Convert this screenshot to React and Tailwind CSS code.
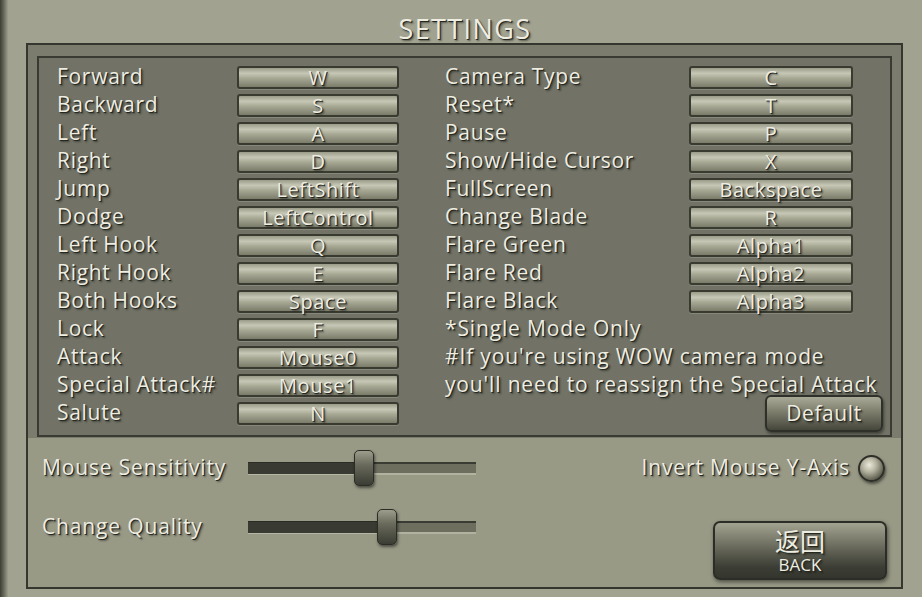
import React from 'react';

const LEFT_KEYS = [
    ['Forward', 'W'],
    ['Backward', 'S'],
    ['Left', 'A'],
    ['Right', 'D'],
    ['Jump', 'LeftShift'],
    ['Dodge', 'LeftControl'],
    ['Left Hook', 'Q'],
    ['Right Hook', 'E'],
    ['Both Hooks', 'Space'],
    ['Lock', 'F'],
    ['Attack', 'Mouse0'],
    ['Special Attack#', 'Mouse1'],
    ['Salute', 'N'],
];

const RIGHT_KEYS = [
    ['Camera Type', 'C'],
    ['Reset*', 'T'],
    ['Pause', 'P'],
    ['Show/Hide Cursor', 'X'],
    ['FullScreen', 'Backspace'],
    ['Change Blade', 'R'],
    ['Flare Green', 'Alpha1'],
    ['Flare Red', 'Alpha2'],
    ['Flare Black', 'Alpha3'],
];

const NOTES = [
    '*Single Mode Only',
    "#If you're using WOW camera mode",
    "you'll need to reassign the Special Attack",
];

// embossed light text used everywhere in this menu
const TXT = 'text-[#eeede2] [text-shadow:1px_1px_0_#26271f,2px_2px_2px_rgba(0,0,0,0.45)]';

function KeyBox({ value, width }) {
    return (
        <div
            className={`${width} h-[23px] rounded-[3px] border-2 border-[#393a30] bg-[linear-gradient(to_bottom,#9a9b88,#c6c7b4_28%,#a6a793_55%,#7a7b69)] shadow-[0_1px_0_rgba(255,255,255,0.15)] flex items-center justify-center`}
        >
            <span className={`text-[20px] leading-[19px] tracking-[0.6px] ${TXT}`}>{value}</span>
        </div>
    );
}

function Slider({ label, value }) {
    return (
        <div className="flex items-center h-[36px]">
            <span className={`w-[206px] text-[21px] tracking-[0.85px] ${TXT}`}>{label}</span>
            <div className="relative w-[228px] h-[36px] flex items-center">
                <div className="w-full h-[13px] flex">
                    <div
                        className="h-full bg-[#393a31] border-t border-[#2a2b24] border-b border-b-[#b5b6a3]"
                        style={{ width: `${value * 100}%` }}
                    />
                    <div className="flex-1 h-full border-t-2 border-[#3a3b32] border-b-2 border-b-[#b1b29f] bg-[#6d6e5e]" />
                </div>
                <div
                    className="absolute top-0 w-[20px] h-[36px] rounded-[5px] border border-[#2b2c25] bg-[linear-gradient(to_bottom,#9c9d8b,#6a6b5c_40%,#3b3c33)] shadow-[1px_2px_3px_rgba(0,0,0,0.5)]"
                    style={{ left: `calc(${value * 100}% - 10px)` }}
                />
            </div>
        </div>
    );
}

export default function App() {
    return (
        <div className="w-[922px] h-[597px] bg-[#a1a28f] flex overflow-hidden font-['Open_Sans',sans-serif]">
            <div className="w-[8px] h-full bg-gradient-to-r from-[#3d3e35] to-[#9c9d8a]" />
            <div className="flex-1 flex flex-col">
                <div className="h-[43px] flex items-end justify-center pb-[1px]">
                    <h1 className={`text-[27px] leading-none tracking-[1.4px] ${TXT}`}>SETTINGS</h1>
                </div>

                <div className="ml-[18px] w-[877px] h-[546px] border-2 border-[#35362d] bg-[#999a86] flex flex-col">
                    {/* key bindings */}
                    <div className="bg-[#7b7c6d] pl-[9px] pr-[9px] pt-[11px] pb-[1px]">
                        <div className="h-[381px] border-2 border-[#393a31] bg-[#727366] flex pt-[5px] pl-[18px]">
                            <div className="flex flex-col">
                                {LEFT_KEYS.map(([label, key]) => (
                                    <div key={label} className="flex items-center h-[28px]">
                                        <span className={`w-[180px] text-[21px] tracking-[0.7px] ${TXT}`}>{label}</span>
                                        <KeyBox value={key} width="w-[162px]" />
                                    </div>
                                ))}
                            </div>
                            <div className="flex flex-col ml-[46px] flex-1 pr-[7px]">
                                {RIGHT_KEYS.map(([label, key]) => (
                                    <div key={label} className="flex items-center h-[28px]">
                                        <span className={`w-[244px] text-[21px] tracking-[0.7px] ${TXT}`}>{label}</span>
                                        <KeyBox value={key} width="w-[164px]" />
                                    </div>
                                ))}
                                {NOTES.map((n) => (
                                    <div key={n} className={`h-[28px] flex items-center whitespace-nowrap text-[21px] tracking-[0.85px] ${TXT}`}>
                                        {n}
                                    </div>
                                ))}
                                <div className="flex justify-end -mt-[4px]">
                                    <button className="w-[118px] h-[37px] rounded-[6px] border-2 border-[#2f3029] bg-[linear-gradient(to_bottom,#a9a997,#7d7d6c_45%,#46473c)] shadow-[1px_2px_3px_rgba(0,0,0,0.45)] flex items-center justify-center">
                                        <span className={`text-[21px] leading-none tracking-[0.6px] ${TXT}`}>Default</span>
                                    </button>
                                </div>
                            </div>
                        </div>
                    </div>

                    {/* sliders + back */}
                    <div className="flex-1 flex justify-between">
                        <div className="flex flex-col pl-[14px] pt-[12px] gap-[23px]">
                            <Slider label="Mouse Sensitivity" value={0.51} />
                            <Slider label="Change Quality" value={0.61} />
                        </div>
                        <div className="flex flex-col items-end pr-[14px] pt-[12px]">
                            <div className="flex items-center h-[36px] gap-[8px] pr-[2px]">
                                <span className={`text-[21px] tracking-[0.85px] ${TXT}`}>Invert Mouse Y-Axis</span>
                                <div className="w-[27px] h-[27px] rounded-full border-2 border-[#2e2f28] bg-[radial-gradient(circle_at_40%_35%,#eceadb,#b4b29f_35%,#5d5d4f_75%,#2f3029)] shadow-[1px_2px_3px_rgba(0,0,0,0.5)]" />
                            </div>
                            <button className="mt-[35px] w-[174px] h-[59px] rounded-[7px] border-2 border-[#2c2d26] bg-[linear-gradient(to_bottom,#a3a391,#6e6f60_40%,#3c3d34_80%,#34352d)] shadow-[1px_2px_4px_rgba(0,0,0,0.5)] flex flex-col items-center justify-center gap-[3px]">
                                <span className={`text-[25px] leading-[25px] font-['Noto_Sans_CJK_SC',sans-serif] ${TXT}`}>返回</span>
                                <span className={`text-[17px] leading-[17px] ${TXT}`}>BACK</span>
                            </button>
                        </div>
                    </div>
                </div>
            </div>
        </div>
    );
}
